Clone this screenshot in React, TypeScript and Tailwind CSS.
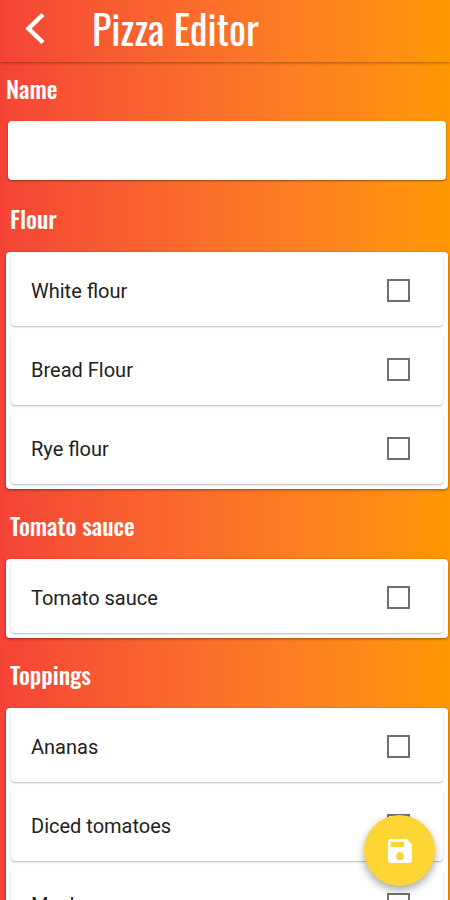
import React, { useState } from 'react';

interface IngredientGroup {
  id: string;
  title: string;
  items: string[];
}

const groups: IngredientGroup[] = [
  { id: 'flour', title: 'Flour', items: ['White flour', 'Bread Flour', 'Rye flour'] },
  { id: 'sauce', title: 'Tomato sauce', items: ['Tomato sauce'] },
  { id: 'toppings', title: 'Toppings', items: ['Ananas', 'Diced tomatoes', 'Mushrooms'] },
];

interface IngredientRowProps {
  label: string;
  checked: boolean;
  onToggle: () => void;
}

const IngredientRow: React.FC<IngredientRowProps> = ({ label, checked, onToggle }) => (
  <li className="px-[5px] pb-[5px] pt-[3px]">
    <label className="flex h-[71px] cursor-pointer items-center justify-between rounded bg-white pl-5 pr-[33px] shadow-[0_1px_2px_rgba(0,0,0,0.28)]">
      <span className="text-xl text-[#222222]">{label}</span>
      <input
        type="checkbox"
        checked={checked}
        onChange={onToggle}
        className="size-[23px] shrink-0 appearance-none border-2 border-[#707070] bg-white checked:border-[#fdd535] checked:bg-[#fdd535]"
      />
    </label>
  </li>
);

const App: React.FC = () => {
  const [name, setName] = useState('');
  const [selected, setSelected] = useState<Set<string>>(new Set());

  const toggle = (key: string) => {
    setSelected(prev => {
      const next = new Set(prev);
      if (next.has(key)) next.delete(key);
      else next.add(key);
      return next;
    });
  };

  return (
    <div className="flex h-screen flex-col overflow-hidden bg-linear-to-r from-[#f44336] to-[#ff9800] font-[Roboto,sans-serif]">
      <header className="flex h-[62px] shrink-0 items-center pb-1.5 shadow-[0_1px_3px_rgba(0,0,0,0.35)]">
        <button type="button" aria-label="Back" className="ml-5 mr-10 flex size-8 items-center justify-center">
          <svg viewBox="0 0 32 32" className="size-8" fill="none" stroke="#ffffff" strokeWidth="4.5">
            <path d="M23 2.5 L8.5 16.5 L23 30.5" />
          </svg>
        </button>
        <h1 className="font-['Oswald','Liberation_Sans_Narrow',sans-serif] text-[40px] leading-[56px] text-white">Pizza Editor</h1>
      </header>

      <main className="flex-1 overflow-y-auto [scrollbar-width:none]">
        <div className="pb-0.5 pl-2 pr-1">
          <label
            htmlFor="pizza-name"
            className="-ml-0.5 flex h-[59px] items-center pb-2 font-['Oswald','Liberation_Sans_Narrow',sans-serif] text-2xl font-medium text-white"
          >
            Name
          </label>
          <input
            id="pizza-name"
            type="text"
            value={name}
            onChange={e => setName(e.target.value)}
            className="block h-[59px] w-full rounded bg-white px-4 text-xl text-[#222222] shadow-[0_1px_2px_rgba(0,0,0,0.4)] outline-none"
          />
        </div>

        {groups.map(group => (
          <section key={group.id} className="pl-1.5 pr-0.5">
            <h2 className="flex h-[70px] items-center px-1 pt-0.5 font-['Oswald','Liberation_Sans_Narrow',sans-serif] text-2xl font-medium text-white">
              {group.title}
            </h2>
            <ul className="rounded bg-white shadow-[0_1px_3px_rgba(0,0,0,0.4)]">
              {group.items.map(item => {
                const key = `${group.id}-${item}`;
                return <IngredientRow key={key} label={item} checked={selected.has(key)} onToggle={() => toggle(key)} />;
              })}
            </ul>
          </section>
        ))}
      </main>

      <button
        type="button"
        aria-label="Save pizza"
        className="fixed bottom-3.5 right-[15px] flex size-[71px] items-center justify-center rounded-full bg-[#fdd535] shadow-[0_4px_8px_rgba(0,0,0,0.35)]"
      >
        <svg viewBox="0 0 24 24" className="size-8" fill="#ffffff">
          <path d="M17 3H5c-1.11 0-2 .9-2 2v14c0 1.1.89 2 2 2h14c1.1 0 2-.9 2-2V7l-4-4zm-5 16c-1.66 0-3-1.34-3-3s1.34-3 3-3 3 1.34 3 3-1.34 3-3 3zm3-10H5V5h10v4z" />
        </svg>
      </button>
    </div>
  );
};

export default App;
